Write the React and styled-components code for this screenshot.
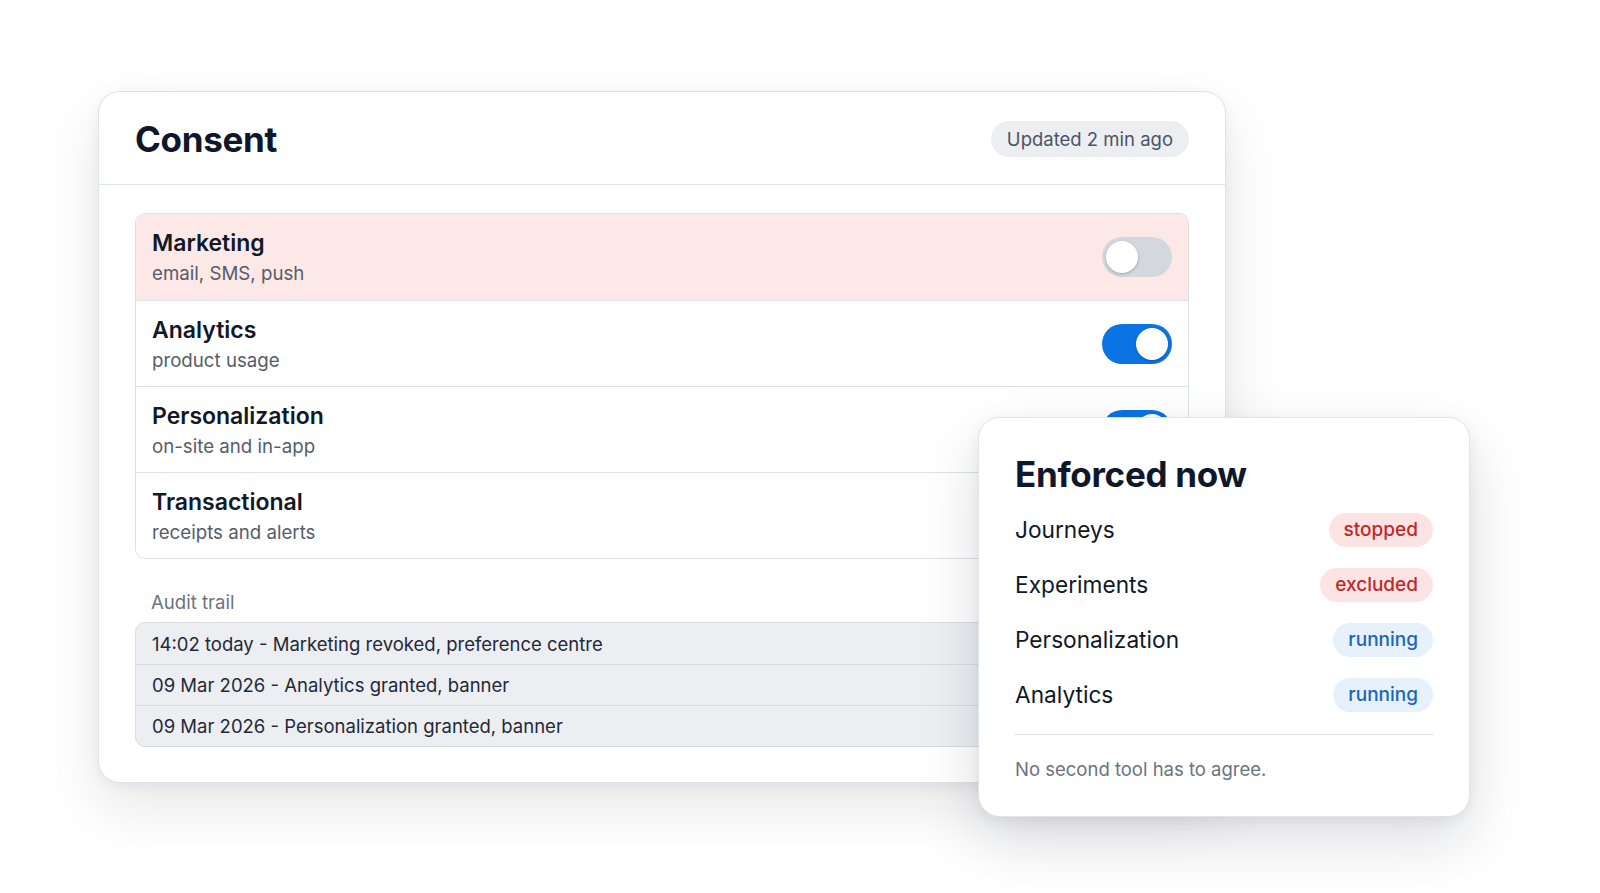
import React from 'react';
import styled, { createGlobalStyle } from 'styled-components';

const GlobalStyle = createGlobalStyle`
  html, body {
    margin: 0;
    padding: 0;
    background: #ffffff;
    font-family: Inter, "Noto Sans", "Liberation Sans", sans-serif;
    color: #0f172a;
  }
  * { box-sizing: border-box; }
`;

const Page = styled.div`
  position: relative;
  width: 1600px;
  height: 893px;
  padding: 91px 0 0 98px;
  overflow: hidden;
`;

const Card = styled.section`
  width: 1128px;
  height: 692px;
  background: #fff;
  border: 1px solid #dfe2e6;
  border-radius: 22px;
  box-shadow: 0 24px 60px rgba(15, 23, 42, 0.10), 0 4px 14px rgba(15, 23, 42, 0.05);
  overflow: hidden;
`;

const Header = styled.header`
  display: flex;
  align-items: center;
  justify-content: space-between;
  height: 93px;
  padding: 2px 36px 0 36px;
  border-bottom: 1px solid #dfe2e6;
`;

const Title = styled.h1`
  margin: 0;
  font-size: 35px;
  font-weight: 700;
  letter-spacing: -0.3px;
  color: #0f172a;
`;

const Pill = styled.span`
  display: inline-flex;
  align-items: center;
  height: 36px;
  padding: 0 16px;
  border-radius: 18px;
  background: #eceef1;
  color: #4b5563;
  font-size: 18.5px;
`;

const Body = styled.div`
  padding: 28px 36px 0 36px;
`;

const List = styled.div`
  border: 1px solid #dcdfe4;
  border-radius: 10px;
  overflow: hidden;
`;

const Row = styled.div`
  display: flex;
  align-items: center;
  justify-content: space-between;
  height: 86px;
  padding: 0 16px;
  background: ${p => (p.$alert ? '#fde8e8' : '#ffffff')};
  & + & {
    border-top: 1px solid #dcdfe4;
  }
`;

const RowText = styled.div`
  display: flex;
  flex-direction: column;
  gap: 5px;
`;

const RowTitle = styled.div`
  font-size: 23px;
  font-weight: 600;
  color: #111827;
`;

const RowSub = styled.div`
  font-size: 18.7px;
  color: #555d69;
`;

const Toggle = styled.span`
  position: relative;
  display: inline-block;
  width: 70px;
  height: 40px;
  border-radius: 20px;
  background: ${p => (p.$on ? '#0b74e5' : '#d4d8de')};
  &::after {
    content: '';
    position: absolute;
    top: 4px;
    left: ${p => (p.$on ? '34px' : '4px')};
    width: 32px;
    height: 32px;
    border-radius: 50%;
    background: #fff;
    box-shadow: 0 1px 3px rgba(0, 0, 0, 0.25);
  }
`;

const AuditLabel = styled.div`
  margin: 32px 0 9px 16px;
  font-size: 18.6px;
  color: #6b7280;
`;

const AuditList = styled.div`
  border: 1px solid #d8dbe0;
  border-radius: 10px;
  overflow: hidden;
  background: #eceef1;
`;

const AuditRow = styled.div`
  height: 41px;
  display: flex;
  align-items: center;
  padding: 0 16px;
  font-size: 18.5px;
  color: #1f2937;
  & + & {
    border-top: 1px solid #d8dbe0;
  }
`;

const Overlay = styled.aside`
  position: absolute;
  left: 978px;
  top: 417px;
  width: 492px;
  height: 400px;
  background: #fff;
  border: 1px solid #e1e4e8;
  border-radius: 22px;
  padding: 34px 36px 0 36px;
  box-shadow: 0 24px 60px rgba(15, 23, 42, 0.14), 0 4px 14px rgba(15, 23, 42, 0.06);
`;

const OverlayTitle = styled.h2`
  margin: 0 0 6px 0;
  font-size: 35px;
  font-weight: 700;
  letter-spacing: -0.3px;
  color: #0f172a;
  line-height: 44px;
`;

const StatusRow = styled.div`
  display: flex;
  align-items: center;
  justify-content: space-between;
  height: 55px;
  font-size: 22.7px;
  color: #111827;
`;

const Badge = styled.span`
  display: inline-flex;
  align-items: center;
  height: 34px;
  padding: 0 15px;
  border-radius: 17px;
  font-size: 19px;
  font-weight: 500;
  background: ${p => (p.$tone === 'red' ? '#fde4e4' : '#e6f1fc')};
  color: ${p => (p.$tone === 'red' ? '#c0282a' : '#1a66b8')};
`;

const Divider = styled.hr`
  margin: 12px 0 0 0;
  border: none;
  border-top: 1px solid #dcdfe4;
`;

const Note = styled.p`
  margin: 23px 0 0 0;
  font-size: 18.5px;
  color: #6b7280;
`;

const consents = [
  { title: 'Marketing', sub: 'email, SMS, push', on: false, alert: true },
  { title: 'Analytics', sub: 'product usage', on: true },
  { title: 'Personalization', sub: 'on-site and in-app', on: true },
  { title: 'Transactional', sub: 'receipts and alerts', on: true },
];

const audit = [
  '14:02 today - Marketing revoked, preference centre',
  '09 Mar 2026 - Analytics granted, banner',
  '09 Mar 2026 - Personalization granted, banner',
];

const enforced = [
  { name: 'Journeys', status: 'stopped', tone: 'red' },
  { name: 'Experiments', status: 'excluded', tone: 'red' },
  { name: 'Personalization', status: 'running', tone: 'blue' },
  { name: 'Analytics', status: 'running', tone: 'blue' },
];

export default function App() {
  return (
    <>
      <GlobalStyle />
      <Page>
        <Card>
          <Header>
            <Title>Consent</Title>
            <Pill>Updated 2 min ago</Pill>
          </Header>
          <Body>
            <List>
              {consents.map(c => (
                <Row key={c.title} $alert={c.alert}>
                  <RowText>
                    <RowTitle>{c.title}</RowTitle>
                    <RowSub>{c.sub}</RowSub>
                  </RowText>
                  <Toggle $on={c.on} />
                </Row>
              ))}
            </List>
            <AuditLabel>Audit trail</AuditLabel>
            <AuditList>
              {audit.map(a => (
                <AuditRow key={a}>{a}</AuditRow>
              ))}
            </AuditList>
          </Body>
        </Card>
        <Overlay>
          <OverlayTitle>Enforced now</OverlayTitle>
          {enforced.map(e => (
            <StatusRow key={e.name}>
              <span>{e.name}</span>
              <Badge $tone={e.tone}>{e.status}</Badge>
            </StatusRow>
          ))}
          <Divider />
          <Note>No second tool has to agree.</Note>
        </Overlay>
      </Page>
    </>
  );
}
